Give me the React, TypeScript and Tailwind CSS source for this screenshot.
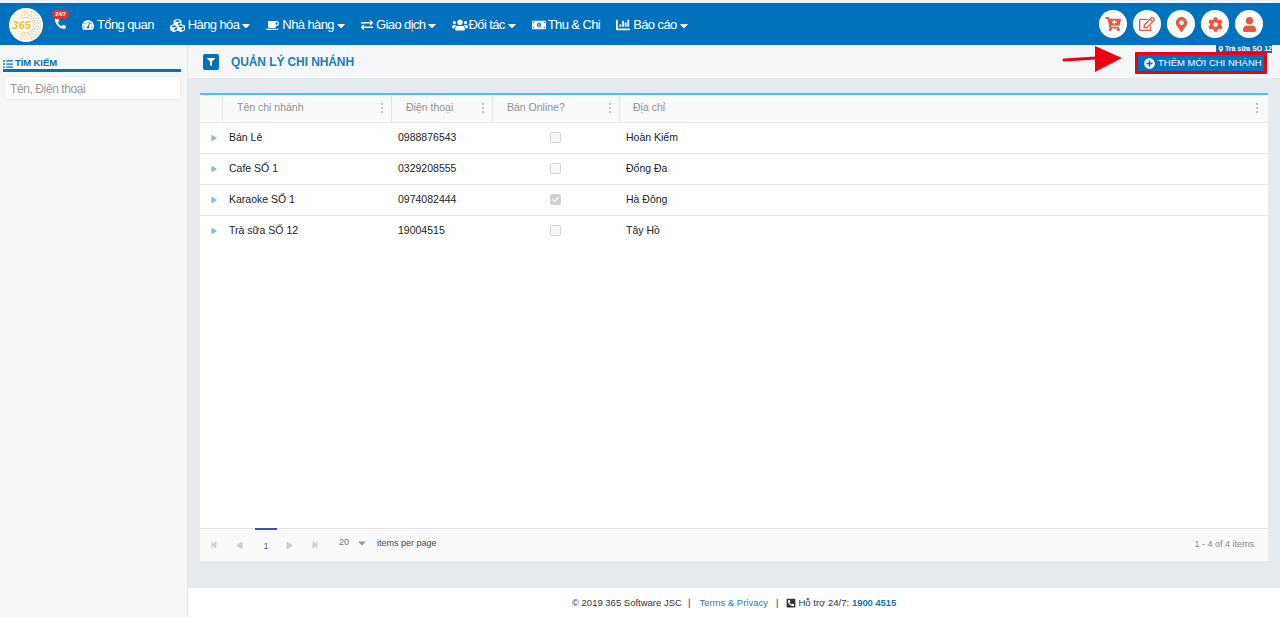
import type { ReactNode } from 'react'
import {
  FaCaretDown,
  FaCartPlus,
  FaChartBar,
  FaCheck,
  FaCog,
  FaCoffee,
  FaCubes,
  FaExchangeAlt,
  FaFilter,
  FaListUl,
  FaMapMarkerAlt,
  FaMoneyBillAlt,
  FaPhoneAlt,
  FaPhoneSquareAlt,
  FaPlusCircle,
  FaRegEdit,
  FaStepBackward,
  FaStepForward,
  FaPlay,
  FaTachometerAlt,
  FaUser,
  FaUsers,
} from 'react-icons/fa'

const menu = [
  { icon: <FaTachometerAlt className="w-[12px] h-[12px]" />, label: 'Tổng quan', gap: 'mr-[3px]' },
  { icon: <FaCubes className="w-[15px] h-[15px]" />, label: 'Hàng hóa', gap: 'mr-[3px]', caret: true },
  { icon: <FaCoffee className="w-[13px] h-[13px]" />, label: 'Nhà hàng', gap: 'mr-[3px]', caret: true },
  { icon: <FaExchangeAlt className="w-[12px] h-[12px]" />, label: 'Giao dịch', gap: 'mr-[3px]', caret: true },
  { icon: <FaUsers className="w-[16px] h-[16px]" />, label: 'Đối tác', gap: 'mr-0', caret: true },
  { icon: <FaMoneyBillAlt className="w-[14px] h-[14px]" />, label: 'Thu & Chi', gap: 'mr-[2px]' },
  { icon: <FaChartBar className="w-[14px] h-[14px]" />, label: 'Báo cáo', gap: 'mr-[3px]', caret: true },
]

const rows = [
  { name: 'Bán Lẻ', phone: '0988876543', online: false, address: 'Hoàn Kiếm' },
  { name: 'Cafe SỐ 1', phone: '0329208555', online: false, address: 'Đống Đa' },
  { name: 'Karaoke SỐ 1', phone: '0974082444', online: true, address: 'Hà Đông' },
  { name: 'Trà sữa SỐ 12', phone: '19004515', online: false, address: 'Tây Hồ' },
]

const gridCols = 'grid grid-cols-[23px_169px_101px_127px_1fr]'

function Logo() {
  const dots = []
  for (let ring = 0; ring < 4; ring++) {
    for (let i = 0; i < 26; i++) {
      const a = (i / 26) * Math.PI * 2 + ring * 0.12
      const r = 15.5 - ring * 2.4
      const x = 18 + Math.cos(a) * r
      const y = 18 + Math.sin(a) * r
      if (x < 21 && y > 11 && y < 25) continue
      dots.push(<circle key={`${ring}-${i}`} cx={x} cy={y} r={0.6} fill="#f0913a" opacity={x > 14 ? 0.9 : 0.45} />)
    }
  }
  return (
    <div className="relative w-[34px] h-[34px] rounded-full bg-[#fffdf5] shrink-0 mt-[1px]">
      <svg viewBox="0 0 36 36" className="w-full h-full">
        {dots}
      </svg>
      <span className="absolute left-[3px] top-[11px] text-[11.5px] leading-[12px] font-bold italic text-[#f2bd2c]">365</span>
    </div>
  )
}

function RoundButton({ children }: { children: ReactNode }) {
  return (
    <div className="w-[28px] h-[28px] rounded-full bg-white flex items-center justify-center text-[#e8573f] text-[15px]">
      {children}
    </div>
  )
}

function ColumnDots({ last }: { last?: boolean }) {
  return (
    <div className={`flex flex-col gap-[2px] ${last ? 'mr-[10px]' : 'mr-[8px]'}`}>
      <span className="w-[2px] h-[2px] bg-[#c4c4c4]" />
      <span className="w-[2px] h-[2px] bg-[#c4c4c4]" />
      <span className="w-[2px] h-[2px] bg-[#c4c4c4]" />
    </div>
  )
}

function HeaderCell({ label, pad, last }: { label: string; pad: string; last?: boolean }) {
  return (
    <div className={`flex items-center justify-between pb-[2px] ${last ? '' : 'border-r border-[#e6e6e6]'} ${pad}`}>
      <span className="text-[10.5px] text-[#8f8f8f]">{label}</span>
      <ColumnDots last={last} />
    </div>
  )
}

function Checkbox({ checked }: { checked: boolean }) {
  return (
    <div
      className={`w-[11px] h-[11px] mb-[2px] rounded-[2px] border border-[#d6d6d6] flex items-center justify-center text-white text-[7px] ${
        checked ? 'bg-[#cfcfcf]' : 'bg-[#f7f7f7]'
      }`}
    >
      {checked && <FaCheck />}
    </div>
  )
}

export default function App() {
  return (
    <div className="relative h-[617px] w-[1280px] overflow-hidden bg-white flex flex-col font-['Liberation_Sans',Arial,sans-serif]">
      <div className="h-[3px] bg-[#eef5fa]" />
      <header className="h-[42px] bg-[#0071bc] flex items-center text-white pl-[9px] pr-[17px] shrink-0">
        <Logo />
        <div className="relative w-[39px] h-full">
          <FaPhoneAlt className="absolute left-[12px] top-[15px] text-[11px]" />
          <span className="absolute left-[9px] top-[7px] w-[17px] h-[9px] rounded-full bg-[#d9363a] text-[5.5px] leading-[9px] font-bold text-center">
            24/7
          </span>
        </div>
        <nav className="flex items-center gap-[16px] mt-[2px]">
          {menu.map((item) => (
            <div key={item.label} className="flex items-center text-[13px] tracking-[-0.6px]">
              <span className={item.gap}>{item.icon}</span>
              <span>{item.label}</span>
              {item.caret && <FaCaretDown className="w-[8px] h-[13px] ml-[3px]" />}
            </div>
          ))}
        </nav>
        <div className="ml-auto flex items-center gap-[6px]">
          <RoundButton>
            <FaCartPlus className="text-[16px]" />
          </RoundButton>
          <RoundButton>
            <FaRegEdit className="text-[16px]" />
          </RoundButton>
          <RoundButton>
            <FaMapMarkerAlt />
          </RoundButton>
          <RoundButton>
            <FaCog />
          </RoundButton>
          <RoundButton>
            <FaUser />
          </RoundButton>
        </div>
      </header>

      <div className="flex flex-1 min-h-0">
        <aside className="w-[188px] shrink-0 bg-[#f4f6f7] border-r border-[#e3e6e8] pl-[3px] pr-[6px] pt-[12px]">
          <div className="flex items-center gap-[2px] border-b-[3px] border-[#0071bc] pt-[1px] text-[#0f6cb0] text-[9.5px] tracking-[-0.1px] font-bold h-[15px]">
            <FaListUl className="text-[10px]" />
            <span>TÌM KIẾM</span>
          </div>
          <div className="mt-[4px] ml-[1px] h-[24px] bg-white border border-[#eceff1] flex items-center pl-[5px] pt-[2px] text-[12px] tracking-[-0.4px] text-[#999]">
            Tên, Điện thoại
          </div>
        </aside>

        <main className="flex-1 flex flex-col min-w-0">
          <div className="h-[33px] bg-[#f4f6f7] flex items-center pl-[15px] shrink-0">
            <div className="w-[16px] h-[16px] rounded-[2px] bg-[#0071bc] flex items-center justify-center text-white text-[8px]">
              <FaFilter />
            </div>
            <h1 className="ml-[12px] text-[12px] font-bold tracking-[-0.1px] text-[#1f7ab8]">QUẢN LÝ CHI NHÁNH</h1>
          </div>

          <div className="flex-1 bg-[#e7eaed] pt-[15px] pb-[27px] pl-[12px] pr-[12px] min-h-0">
            <div className="h-full bg-white flex flex-col">
              <div className="h-[2px] bg-[#4fc0ee] shrink-0" />
              <div className={`${gridCols} h-[28px] bg-[#fafafa] border-b border-[#e6e6e6] shrink-0`}>
                <div className="border-r border-[#e6e6e6]" />
                <HeaderCell label="Tên chi nhánh" pad="pl-[14px]" />
                <HeaderCell label="Điện thoại" pad="pl-[14px]" />
                <HeaderCell label="Bán Online?" pad="pl-[14px]" />
                <HeaderCell label="Địa chỉ" pad="pl-[13px]" last />
              </div>
              <div className="flex-1">
                {rows.map((row, i) => (
                  <div
                    key={row.name}
                    className={`${gridCols} h-[31px] items-center text-[10.5px] text-[#222] border-b ${i < rows.length - 1 ? 'border-[#e6e6e6]' : 'border-transparent'}`}
                  >
                    <div className="pl-[11px]">
                      <FaPlay className="text-[6px] text-[#8dbcd8]" />
                    </div>
                    <div className="pl-[6px]">{row.name}</div>
                    <div className="pl-[6px]">{row.phone}</div>
                    <div className="flex justify-center pr-[2px]">
                      <Checkbox checked={row.online} />
                    </div>
                    <div className="pl-[6px]">{row.address}</div>
                  </div>
                ))}
              </div>
              <div className="relative h-[33px] bg-[#fafafa] border-t border-[#e4e4e4] flex items-center pl-[10px] pr-[14px] shrink-0 text-[#c9ced3]">
                <FaStepBackward className="text-[8px]" />
                <FaPlay className="text-[7px] ml-[18px] scale-x-[-1]" />
                <div className="relative w-[22px] ml-[12px] text-center text-[9px] text-[#4a6a8a] pt-[4px]">
                  1
                  <span className="absolute left-0 right-0 -top-[8px] h-[2px] bg-[#3f51b5]" />
                </div>
                <FaPlay className="text-[7px] ml-[9px]" />
                <FaStepForward className="text-[8px] ml-[18px]" />
                <span className="ml-[20px] text-[9px] text-[#777] -mt-[5px]">20</span>
                <FaCaretDown className="text-[12px] text-[#9a9a9a] ml-[7px] -mt-[5px]" />
                <span className="ml-[9px] text-[9px] text-[#444] -mt-[2px]">items per page</span>
                <span className="ml-auto text-[9px] text-[#888]">1 - 4 of 4 items</span>
              </div>
            </div>
          </div>

          <footer className="h-[29px] bg-white flex items-center justify-center shrink-0 text-[9.5px] text-[#333] pt-[1px]">
            <span>© 2019 365 Software JSC</span>
            <span className="ml-[6px]">|</span>
            <span className="ml-[9px] text-[#2a78ae]">Terms &amp; Privacy</span>
            <span className="mx-[8px]">|</span>
            <FaPhoneSquareAlt className="text-[10px] mr-[2px]" />
            <span>Hỗ trợ 24/7:</span>
            <span className="ml-[3px] font-bold tracking-[-0.1px] text-[#1573b3]">1900 4515</span>
          </footer>
        </main>
      </div>

      {/* store tag under the nav */}
      <div className="absolute left-[1216px] top-[45px] h-[8px] w-[56px] bg-[#0f6cb0] text-white text-[7px] leading-[8px] font-bold flex items-center pl-[2px] gap-[1px] whitespace-nowrap overflow-hidden">
        <FaMapMarkerAlt className="text-[6px]" />
        <span>Trà sữa SỐ 12</span>
      </div>

      {/* add button with the red annotation box */}
      <div className="absolute left-[1135px] top-[52px] w-[132px] h-[22px] border-[3px] border-[#ee0010] rounded-[1px] bg-[#0071bc] flex items-center pl-[6px] text-white">
        <FaPlusCircle className="text-[11px] mr-[3px]" />
        <span className="text-[9.5px] whitespace-nowrap">THÊM MỚI CHI NHÁNH</span>
      </div>

      {/* red arrow annotation */}
      <svg className="absolute left-[1062px] top-[45px]" width="62" height="28" viewBox="0 0 62 28">
        <path d="M2 15 L34 13" stroke="#ee0010" strokeWidth="3" strokeLinecap="round" fill="none" />
        <path d="M33 1 L60 13 L33 27 Z" fill="#ee0010" />
      </svg>
    </div>
  )
}
